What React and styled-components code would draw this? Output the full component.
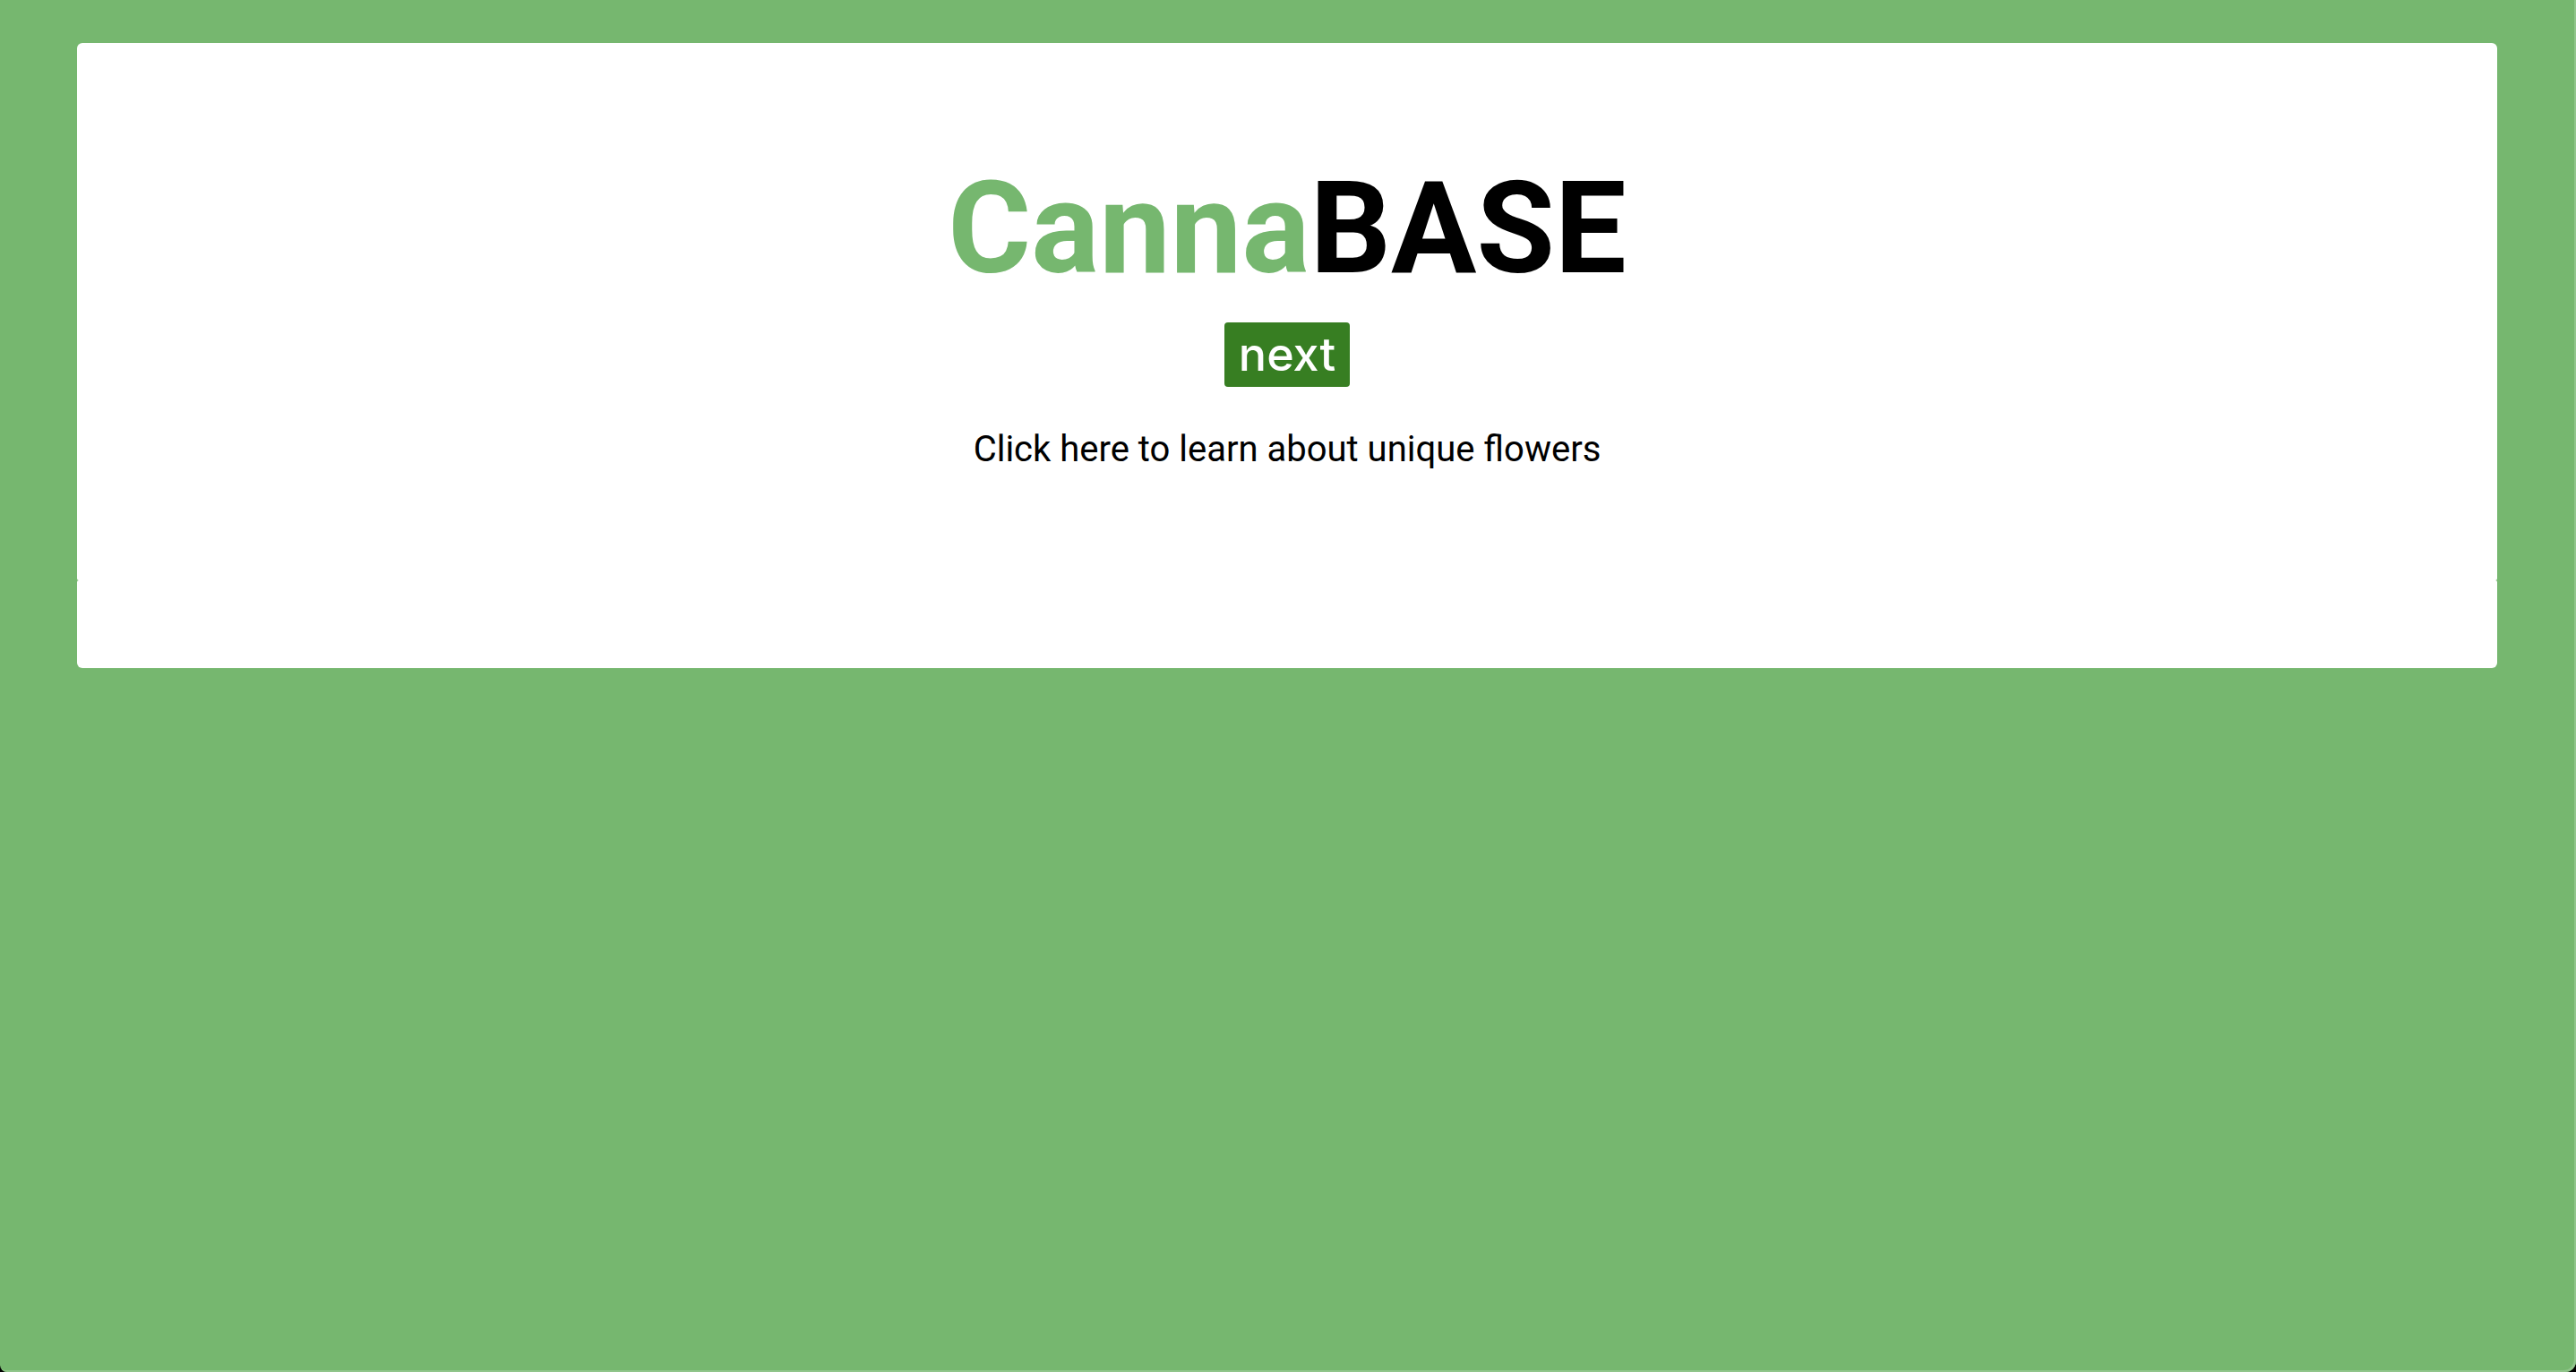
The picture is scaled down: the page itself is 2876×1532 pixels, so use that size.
import React from "react";
import styled, { createGlobalStyle } from "styled-components";

const GlobalStyle = createGlobalStyle`
  *, *::before, *::after { box-sizing: border-box; }
  html { background: #000; }
  body { margin: 0; font-family: Roboto, "Open Sans", sans-serif; color: #000; }
`;

const Page = styled.div`
  min-height: 100vh;
  padding: 48px 88px 48px 86px;
  background: #76b76f;
  border-radius: 0 0 12px 8px;
  box-shadow: inset -2px -2px 0 #91c58b;
`;

const Hero = styled.main`
  display: flex;
  flex-direction: column;
  align-items: center;
  padding: 124px 24px 122px;
  background: #fff;
  border-radius: 6px 6px 2px 2px;
`;

const Footer = styled.footer`
  height: 98px;
  background: #fff;
  border-radius: 2px 2px 6px 6px;
`;

const Title = styled.h1`
  margin: 0;
  font-size: 142px;
  line-height: 168px;
  font-weight: 700;
`;

const Accent = styled.span`
  color: #76b76f;
`;

const NextButton = styled.button`
  margin: 20px 0 0;
  padding: 0 16px;
  height: 72px;
  border: 0;
  border-radius: 4px;
  background: #377e22;
  color: #fff;
  font-family: Inter, Roboto, sans-serif;
  font-size: 52px;
  font-weight: 500;
  line-height: 72px;
  cursor: pointer;
`;

const Hint = styled.p`
  margin: 46px 0 0;
  font-size: 40px;
  line-height: 48px;
`;

export default function App() {
  return (
    <>
      <GlobalStyle />
      <Page>
        <Hero>
          <Title>
            <Accent>Canna</Accent>BASE
          </Title>
          <NextButton type="button">next</NextButton>
          <Hint>Click here to learn about unique flowers</Hint>
        </Hero>
        <Footer />
      </Page>
    </>
  );
}
